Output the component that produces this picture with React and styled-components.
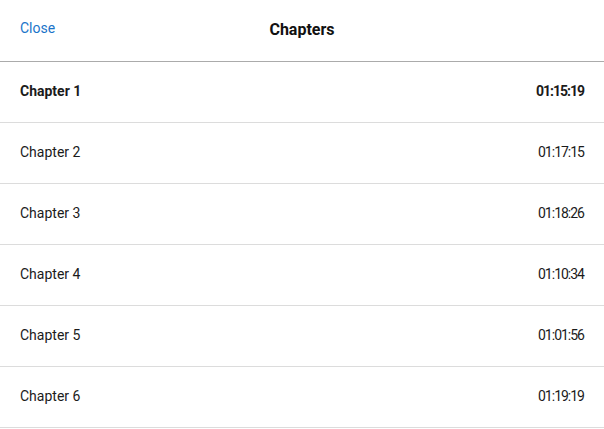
import React from 'react';
import styled, { createGlobalStyle } from 'styled-components';

const GlobalStyle = createGlobalStyle`
  html, body {
    margin: 0;
    padding: 0;
    background: #fff;
  }
  body {
    font-family: Roboto, "Liberation Sans", sans-serif;
    color: #1b1b1b;
  }
`;

const Sheet = styled.div`
  width: 604px;
  background: #fff;
`;

const Header = styled.div`
  position: relative;
  height: 61px;
  display: flex;
  align-items: center;
  justify-content: center;
  border-bottom: 1px solid #ababab;
`;

const CloseButton = styled.button`
  position: absolute;
  left: 20px;
  top: 20px;
  padding: 0;
  border: 0;
  background: none;
  font-family: inherit;
  font-size: 14px;
  color: #1a74c9;
  cursor: pointer;
`;

const Title = styled.h1`
  margin: 0;
  font-size: 16px;
  font-weight: 700;
  color: #111;
  padding-bottom: 2px;
`;

const List = styled.ul`
  list-style: none;
  margin: 0;
  padding: 0;
`;

const Row = styled.li`
  height: 60px;
  box-sizing: border-box;
  display: flex;
  align-items: center;
  justify-content: space-between;
  padding: 0 19px 2px 20px;
  border-bottom: 1px solid #dcdcdc;
  font-size: 14px;
  font-weight: ${(p) => (p.$active ? 700 : 400)};
  color: #1b1b1b;
  height: 61px;
`;

const Time = styled.span`
  letter-spacing: -1px;
  margin-right: 1px;
`;

const chapters = [
  { name: 'Chapter 1', time: '01:15:19' },
  { name: 'Chapter 2', time: '01:17:15' },
  { name: 'Chapter 3', time: '01:18:26' },
  { name: 'Chapter 4', time: '01:10:34' },
  { name: 'Chapter 5', time: '01:01:56' },
  { name: 'Chapter 6', time: '01:19:19' },
];

export default function App() {
  return (
    <>
      <GlobalStyle />
      <Sheet>
        <Header>
          <CloseButton>Close</CloseButton>
          <Title>Chapters</Title>
        </Header>
        <List>
          {chapters.map((c, i) => (
            <Row key={c.name} $active={i === 0}>
              <span>{c.name}</span>
              <Time>{c.time}</Time>
            </Row>
          ))}
        </List>
      </Sheet>
    </>
  );
}
